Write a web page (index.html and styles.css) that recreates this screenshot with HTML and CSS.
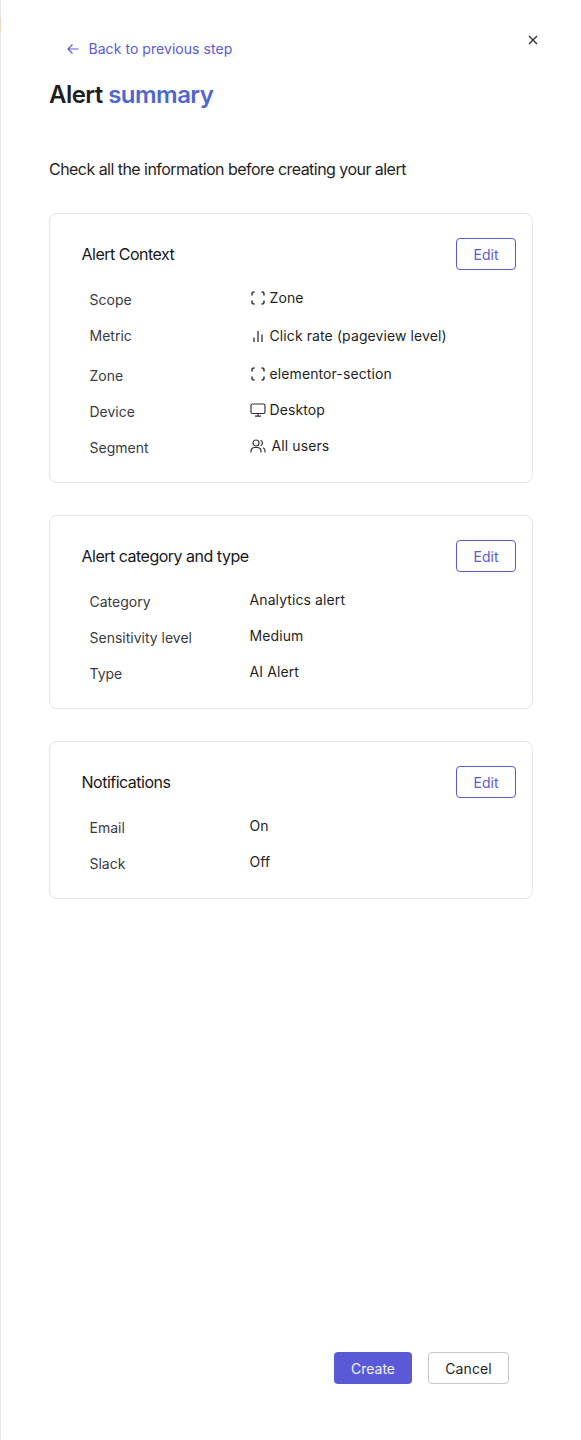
FILE: index.html
```html
<!DOCTYPE html>
<html lang="en">
<head>
<meta charset="utf-8">
<title>Alert summary</title>
<link rel="stylesheet" href="styles.css">
</head>
<body>
<div class="edge"><span class="edge-mark"></span></div>
<main class="panel">
  <button class="close" aria-label="Close">
    <svg width="10" height="10" viewBox="0 0 10 10"><path d="M1 1l8 8M9 1L1 9" stroke="#2b2b30" stroke-width="1.3" fill="none"/></svg>
  </button>
  <a class="back">
    <svg width="12" height="12" viewBox="0 0 12 12"><path d="M11.5 6H1M5.5 1.5L1 6l4.500 4.500" stroke="#5a5ad6" stroke-width="1.200" fill="none"/></svg>
    <span>Back to previous step</span>
  </a>
  <h1 class="title">Alert <span class="accent">summary</span></h1>
  <p class="intro">Check all the information before creating your alert</p>

  <section class="card">
    <div class="card-head"><h2>Alert Context</h2><button class="edit">Edit</button></div>
    <div class="rows">
      <div class="row"><span class="label">Scope</span><span class="value">
        <svg class="ico" width="16" height="16" viewBox="0 0 16 16"><path d="M2 5.500V4a2 2 0 0 1 2-2h.5M11.500 2H12a2 2 0 0 1 2 2v1.500M14 10.500V12a2 2 0 0 1-2 2h-.5M4.500 14H4a2 2 0 0 1-2-2v-1.500" stroke="#33333a" stroke-width="1.500" fill="none"/></svg>Zone</span></div>
      <div class="row row-tall"><span class="label">Metric</span><span class="value">
        <svg class="ico" width="16" height="16" viewBox="0 0 16 16"><path d="M4 9.500V14M8 3v11M12 6.500V14" stroke="#33333a" stroke-width="1.300" fill="none"/></svg>Click rate (pageview level)</span></div>
      <div class="row"><span class="label">Zone</span><span class="value">
        <svg class="ico" width="16" height="16" viewBox="0 0 16 16"><path d="M2 5.500V4a2 2 0 0 1 2-2h.5M11.500 2H12a2 2 0 0 1 2 2v1.500M14 10.500V12a2 2 0 0 1-2 2h-.5M4.500 14H4a2 2 0 0 1-2-2v-1.500" stroke="#33333a" stroke-width="1.500" fill="none"/></svg>elementor-section</span></div>
      <div class="row"><span class="label">Device</span><span class="value">
        <svg class="ico" width="16" height="16" viewBox="0 0 16 16"><rect x="1" y="2" width="14" height="9.500" rx="1.500" stroke="#33333a" stroke-width="1.200" fill="none"/><path d="M8 11.500V14M5 14.200h6" stroke="#33333a" stroke-width="1.200" fill="none"/></svg>Desktop</span></div>
      <div class="row"><span class="label">Segment</span><span class="value value-wide">
        <svg class="ico" width="16" height="16" viewBox="0 0 16 16"><circle cx="6" cy="5" r="3" stroke="#33333a" stroke-width="1.200" fill="none"/><path d="M1 14.500v-1.500a3.500 3.500 0 0 1 3.500-3.500h3a3.500 3.500 0 0 1 3.500 3.500v1.500M10.500 2.200a3 3 0 0 1 0 5.600M13 9.800a3.500 3.500 0 0 1 2 3.200v1.500" stroke="#33333a" stroke-width="1.200" fill="none"/></svg>All users</span></div>
    </div>
  </section>

  <section class="card">
    <div class="card-head"><h2>Alert category and type</h2><button class="edit">Edit</button></div>
    <div class="rows">
      <div class="row"><span class="label">Category</span><span class="value">Analytics alert</span></div>
      <div class="row"><span class="label">Sensitivity level</span><span class="value">Medium</span></div>
      <div class="row"><span class="label">Type</span><span class="value">AI Alert</span></div>
    </div>
  </section>

  <section class="card">
    <div class="card-head"><h2>Notifications</h2><button class="edit">Edit</button></div>
    <div class="rows">
      <div class="row"><span class="label">Email</span><span class="value">On</span></div>
      <div class="row"><span class="label">Slack</span><span class="value">Off</span></div>
    </div>
  </section>

  <div class="actions">
    <button class="btn btn-primary">Create</button>
    <button class="btn btn-secondary">Cancel</button>
  </div>
</main>
</body>
</html>
```
FILE: styles.css
```css
* { box-sizing: border-box; }
html, body { margin: 0; padding: 0; background: #fff; }
body {
  height: 1440px;
  overflow: hidden;
  font-family: Inter, "Liberation Sans", sans-serif;
  color: #1f1f23;
  display: flex;
}
.edge {
  width: 1px;
  height: 1440px;
  background: #e6e6e6;
  flex: none;
}
.edge-mark {
  display: block;
  height: 14px;
  margin-top: 18px;
  background: #e9d9bf;
}
.panel {
  position: relative;
  flex: 1;
  height: 1440px;
  padding: 39px 47px 0 48px;
  display: flex;
  flex-direction: column;
}
.close {
  position: absolute;
  top: 35px;
  right: 43px;
  width: 10px;
  height: 10px;
  padding: 0;
  border: 0;
  background: none;
  display: flex;
}
.back {
  display: flex;
  align-items: center;
  gap: 9.500px;
  height: 20px;
  margin-left: 18px;
  font-size: 14px;
  line-height: 20px;
  letter-spacing: 0.05px;
  color: #5a5ad6;
}
.title {
  margin: 18px 0 0;
  font-size: 24px;
  line-height: 36px;
  font-weight: 600;
  letter-spacing: -0.54px;
  color: #1f1f23;
}
.accent { color: #4f67cc; }
.intro {
  margin: 44px 0 0;
  font-size: 16px;
  line-height: 24px;
  letter-spacing: -0.54px;
}
.card {
  margin-top: 32px;
  margin-right: 1px;
  padding: 24px 16px 10px 31.500px;
  border: 1px solid #e4e4e7;
  border-radius: 8px;
}
.card-head {
  display: flex;
  align-items: center;
  justify-content: space-between;
  height: 32px;
}
.card-head h2 {
  margin: 0;
  font-size: 16px;
  line-height: 24px;
  font-weight: 400;
  letter-spacing: -0.5px;
  color: #17171a;
}
.edit {
  width: 60px;
  height: 32px;
  padding: 1px 0 0;
  border: 1px solid #5a5ad6;
  border-radius: 4px;
  background: #fff;
  color: #5a5ad6;
  font: 14px/20px Inter, "Liberation Sans", sans-serif;
}
.rows {
  margin-top: 18px;
  padding-left: 8px;
  display: flex;
  flex-direction: column;
}
.row {
  display: flex;
  height: 36px;
  font-size: 14px;
  line-height: 20px;
}
.row-tall { height: 40px; }
.label {
  width: 160px;
  padding-top: 2px;
  color: #3a3a40;
}
.value {
  display: flex;
  align-items: center;
  gap: 4px;
  height: 20px;
  font-weight: 400;
  letter-spacing: 0.1px;
  color: #1f1f23;
}
.value-wide { gap: 6px; }
.row-tall .value { margin-top: 2px; }
.ico { flex: none; }
.actions {
  position: absolute;
  top: 1352px;
  right: 72px;
  display: flex;
  gap: 16px;
}
.btn {
  height: 32px;
  padding: 2px 0 0;
  border-radius: 4px;
  font: 14px/20px Inter, "Liberation Sans", sans-serif;
}
.btn-primary {
  width: 78px;
  border: 0;
  background: #5a5ad6;
  color: #f2f2ff;
}
.btn-secondary {
  width: 81px;
  border: 1px solid #c6c6cc;
  background: #fff;
  color: #1f1f23;
  letter-spacing: 0.1px;
}
```
